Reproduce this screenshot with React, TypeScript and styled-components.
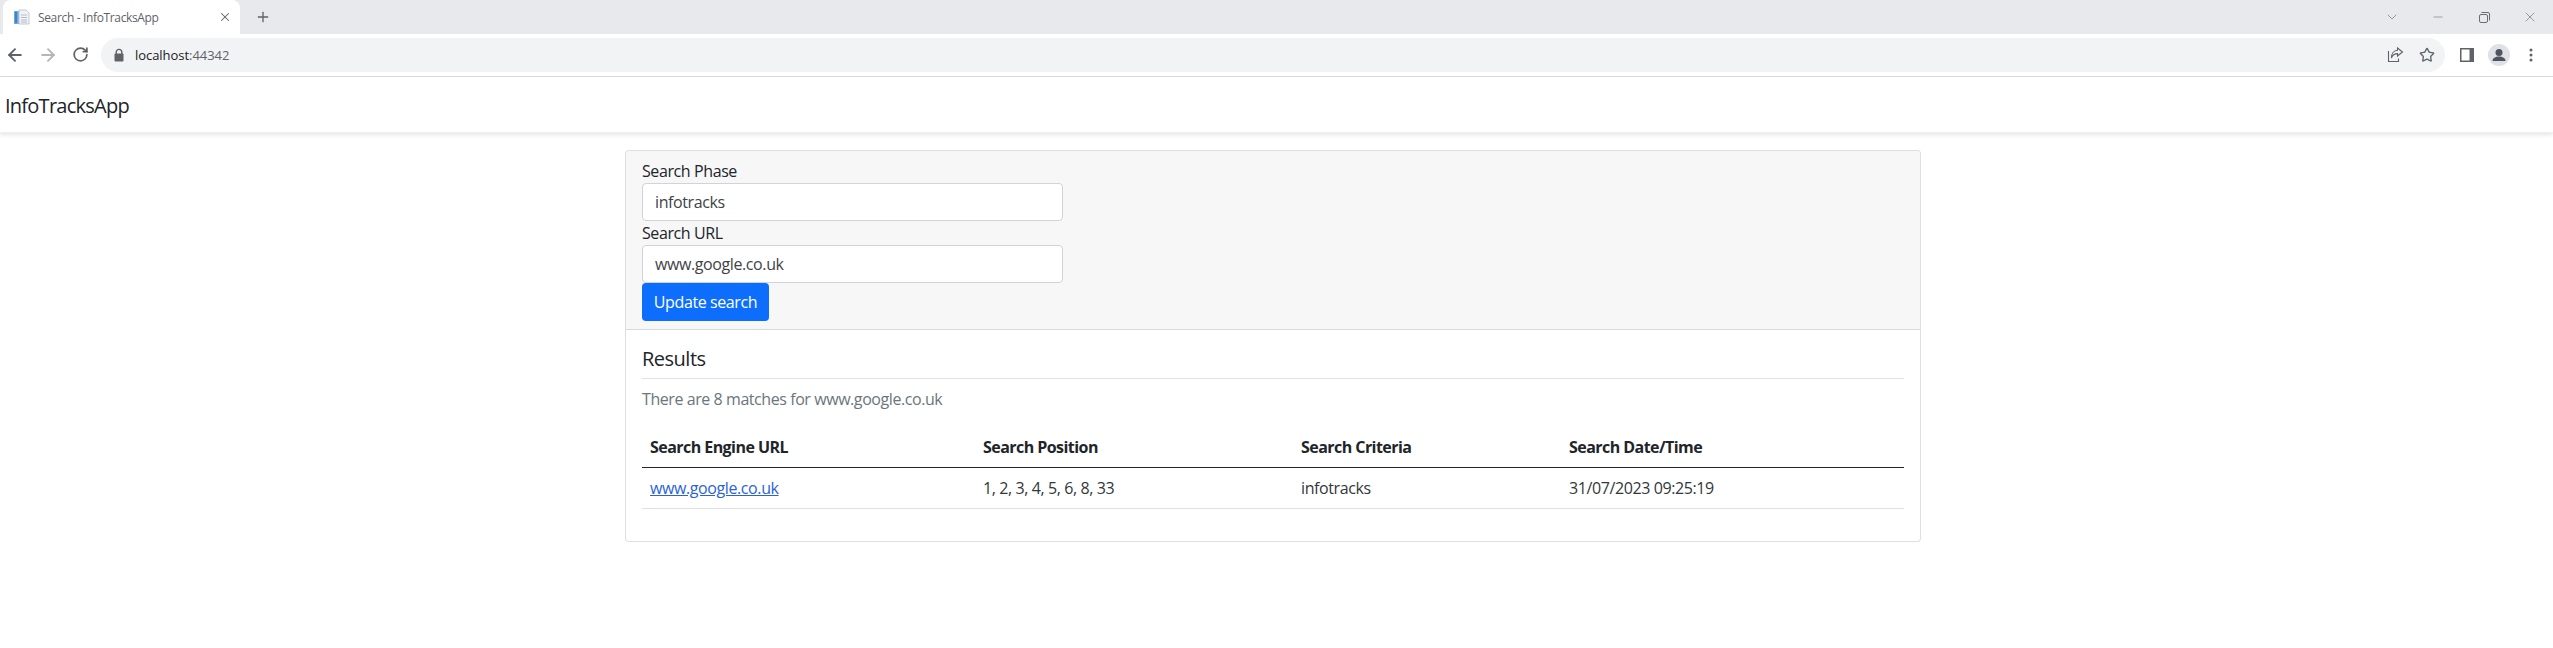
import * as React from "react";
import styled, { createGlobalStyle } from "styled-components";
import { ArrowLeft, ArrowRight, RotateCw, Star, Plus, X, ChevronDown, Minus } from "lucide-react";

const GlobalStyle = createGlobalStyle`
  html, body {
    margin: 0;
    padding: 0;
    background: #fff;
    font-family: "Open Sans", "Noto Sans", sans-serif;
    color: #212529;
  }
  * { box-sizing: border-box; }
`;

const TabStrip = styled.div`
  height: 34px;
  background: #e7e9ec;
  display: flex;
  align-items: stretch;
  padding-left: 3px;
`;
const Tab = styled.div`
  width: 237px;
  background: #fff;
  border-radius: 8px 8px 0 0;
  display: flex;
  align-items: center;
  padding: 0 8px 0 10px;
  position: relative;
`;
const TabTitle = styled.span`
  font-size: 12px;
  letter-spacing: -0.35px;
  color: #5f6368;
  margin-left: 8px;
  flex: 1;
`;
const NewTab = styled.div`
  width: 46px;
  display: flex;
  align-items: center;
  justify-content: center;
  color: #5f6368;
`;
const WindowControls = styled.div`
  margin-left: auto;
  display: flex;
  align-items: center;
  color: #6b6e73;
`;
const WindowButton = styled.div`
  width: 46px;
  height: 28px;
  display: flex;
  align-items: center;
  justify-content: center;
`;
const Toolbar = styled.div`
  height: 43px;
  background: #fff;
  border-bottom: 1px solid #dadce0;
  display: flex;
  align-items: center;
  padding: 0 0 1px 0;
  color: #5f6368;
`;
const NavButton = styled.div<{ $width: number; $muted?: boolean }>`
  width: ${(p) => p.$width}px;
  height: 34px;
  display: flex;
  align-items: center;
  justify-content: center;
  color: ${(p) => (p.$muted ? "#b4b6b9" : "#5f6368")};
`;
const Omnibox = styled.div`
  width: 2344px;
  height: 34px;
  margin-left: 7px;
  border-radius: 17px;
  background: #f1f3f4;
  display: flex;
  align-items: center;
  padding-left: 12px;
`;
const UrlHost = styled.span`
  font-size: 13px;
  color: #202124;
  margin-left: 10px;
  letter-spacing: -0.05px;
`;
const UrlPort = styled.span`
  color: #5f6368;
`;
const OmniActions = styled.div`
  margin-left: auto;
  display: flex;
  align-items: center;
  gap: 15px;
  padding-right: 10px;
`;
const ToolbarEnd = styled.div`
  display: flex;
  align-items: center;
  padding-left: 6px;
`;
const ToolbarSlot = styled.div`
  width: 32px;
  display: flex;
  align-items: center;
  justify-content: center;
`;
const Avatar = styled.div`
  width: 22px;
  height: 22px;
  border-radius: 50%;
  background: #dee1e6;
  display: flex;
  align-items: center;
  justify-content: center;
  overflow: hidden;
`;
const Navbar = styled.nav`
  height: 56px;
  background: #fff;
  display: flex;
  align-items: center;
  padding: 1px 0 0 5px;
  box-shadow: 0 2px 4px rgba(0, 0, 0, 0.1);
  border-bottom: 1px solid #f0f0f0;
`;
const Brand = styled.a`
  font-size: 20px;
  color: #212529;
  letter-spacing: -0.75px;
`;
const Main = styled.main`
  width: 1296px;
  margin: 17px 0 0 625px;
`;
const Card = styled.section`
  border: 1px solid rgba(0, 0, 0, 0.125);
  border-radius: 4px;
  background: #fff;
`;
const CardHeader = styled.div`
  background: #f7f7f7;
  border-bottom: 1px solid rgba(0, 0, 0, 0.125);
  padding: 8px 16px;
  border-radius: 3px 3px 0 0;
`;
const Label = styled.label`
  display: block;
  font-size: 16px;
  line-height: 24px;
  letter-spacing: -0.4px;
`;
const FieldBox = styled.div`
  width: 421px;
  height: 38px;
  border: 1px solid #ced4da;
  border-radius: 4px;
  background: #fff;
  padding: 0 12px;
  display: flex;
  align-items: center;
  font-size: 16px;
  letter-spacing: -0.4px;
  color: #3f4347;
`;
const PrimaryButton = styled.button`
  display: block;
  width: 127px;
  height: 38px;
  padding: 0;
  border: none;
  border-radius: 4px;
  background: #0d6efd;
  color: #fff;
  font-family: inherit;
  font-size: 16px;
  letter-spacing: -0.4px;
`;
const CardBody = styled.div`
  padding: 16px;
`;
const Heading = styled.h5`
  margin: 0;
  font-size: 20px;
  line-height: 26px;
  height: 24px;
  font-weight: 400;
  letter-spacing: -0.5px;
`;
const Rule = styled.hr`
  margin: 8px 0;
  border: none;
  border-top: 1px solid #e0e1e2;
`;
const Muted = styled.p`
  margin: 0 0 15px;
  font-size: 16px;
  line-height: 24px;
  color: #6c757d;
  letter-spacing: -0.43px;
`;
const Table = styled.table`
  width: 1262px;
  table-layout: fixed;
  border-collapse: collapse;
  margin-bottom: 16px;
`;
const HeadCell = styled.th<{ $width: number }>`
  width: ${(p) => p.$width}px;
  padding: 9px 8px 7px;
  height: 41px;
  text-align: left;
  font-size: 16px;
  line-height: 24px;
  font-weight: 700;
  letter-spacing: -0.55px;
  border-bottom: 1px solid #212529;
`;
const Cell = styled.td`
  padding: 8px;
  font-size: 16px;
  line-height: 24px;
  letter-spacing: -0.4px;
  color: #33373b;
  border-bottom: 1px solid #dee2e6;
`;
const Link = styled.a`
  color: #2a63d8;
  text-decoration: underline;
`;

const columns = [
  { title: "Search Engine URL", width: 333 },
  { title: "Search Position", width: 318 },
  { title: "Search Criteria", width: 268 },
  { title: "Search Date/Time", width: 343 },
];

const PageIcon = () => (
  <svg width="17" height="17" viewBox="0 0 17 17">
    <rect x="1" y="2" width="5" height="13" fill="#6fa8dc" />
    <rect x="2" y="3" width="2" height="11" fill="#3d85c6" />
    <path d="M6 1h7l3 3v11H6z" fill="#f1f3f6" stroke="#c2c8d0" strokeWidth="1" />
    <path d="M8 6h6M8 8.5h6M8 11h6M8 13h6" stroke="#b5bcc6" strokeWidth="1" />
  </svg>
);
const LockIcon = () => (
  <svg width="12" height="14" viewBox="0 0 12 14">
    <path d="M3.2 6V4.2a2.8 2.8 0 0 1 5.6 0V6" fill="none" stroke="#5f6368" strokeWidth="1.4" />
    <rect x="1.5" y="5.5" width="9" height="8" rx="1" fill="#5f6368" />
  </svg>
);
const ShareIcon = () => (
  <svg width="17" height="17" viewBox="0 0 17 17" fill="none" stroke="#5f6368" strokeWidth="1.1">
    <path d="M1.5 5v10.5h10v-3" />
    <path d="M10.5 2l5 4-5 4V7.6C7.5 7.6 5.5 9 4.4 12c0-4.5 2.5-7.5 6.1-7.7z" />
  </svg>
);
const RestoreIcon = () => (
  <svg width="11" height="11" viewBox="0 0 11 11" fill="none" stroke="#6b6e73" strokeWidth="1">
    <rect x="0.5" y="2.5" width="8" height="8" rx="1.5" />
    <path d="M2.5 0.5h6.5a1.5 1.5 0 0 1 1.5 1.5v6.5" />
  </svg>
);
const SidePanelIcon = () => (
  <svg width="14" height="14" viewBox="0 0 14 14">
    <rect x="0" y="0" width="14" height="14" fill="#5f6368" />
    <rect x="1.5" y="1.5" width="8" height="11" fill="#fff" />
  </svg>
);
const PersonIcon = () => (
  <svg width="22" height="22" viewBox="0 0 22 22" fill="#50535e">
    <circle cx="11" cy="8.5" r="3.5" />
    <path d="M4.5 17c0-3 3-4.5 6.5-4.5s6.5 1.5 6.5 4.5z" />
  </svg>
);
const DotsIcon = () => (
  <svg width="4" height="14" viewBox="0 0 4 14" fill="#5f6368">
    <circle cx="2" cy="2" r="1.5" />
    <circle cx="2" cy="7" r="1.5" />
    <circle cx="2" cy="12" r="1.5" />
  </svg>
);

export default function App() {
  return (
    <>
      <GlobalStyle />
      <TabStrip>
        <Tab>
          <PageIcon />
          <TabTitle>Search - InfoTracksApp</TabTitle>
          <X size={14} strokeWidth={1.8} color="#5f6368" />
        </Tab>
        <NewTab>
          <Plus size={16} strokeWidth={2} />
        </NewTab>
        <WindowControls>
          <WindowButton>
            <ChevronDown size={16} strokeWidth={1} />
          </WindowButton>
          <WindowButton>
            <Minus size={14} strokeWidth={1} />
          </WindowButton>
          <WindowButton>
            <RestoreIcon />
          </WindowButton>
          <WindowButton>
            <X size={16} strokeWidth={1} />
          </WindowButton>
        </WindowControls>
      </TabStrip>
      <Toolbar>
        <NavButton $width={30}>
          <ArrowLeft size={20} strokeWidth={2.3} />
        </NavButton>
        <NavButton $width={36} $muted>
          <ArrowRight size={20} strokeWidth={2.3} />
        </NavButton>
        <NavButton $width={28}>
          <RotateCw size={17} strokeWidth={2.4} />
        </NavButton>
        <Omnibox>
          <LockIcon />
          <UrlHost>
            localhost<UrlPort>:44342</UrlPort>
          </UrlHost>
          <OmniActions>
            <ShareIcon />
            <Star size={16} strokeWidth={2} color="#5f6368" />
          </OmniActions>
        </Omnibox>
        <ToolbarEnd>
          <ToolbarSlot>
            <SidePanelIcon />
          </ToolbarSlot>
          <ToolbarSlot>
            <Avatar>
              <PersonIcon />
            </Avatar>
          </ToolbarSlot>
          <ToolbarSlot>
            <DotsIcon />
          </ToolbarSlot>
        </ToolbarEnd>
      </Toolbar>
      <Navbar>
        <Brand>InfoTracksApp</Brand>
      </Navbar>
      <Main>
        <Card>
          <CardHeader>
            <Label>Search Phase</Label>
            <FieldBox>infotracks</FieldBox>
            <Label>Search URL</Label>
            <FieldBox>www.google.co.uk</FieldBox>
            <PrimaryButton>Update search</PrimaryButton>
          </CardHeader>
          <CardBody>
            <Heading>Results</Heading>
            <Rule />
            <Muted>There are 8 matches for www.google.co.uk</Muted>
            <Table>
              <thead>
                <tr>
                  {columns.map((c) => (
                    <HeadCell key={c.title} $width={c.width}>
                      {c.title}
                    </HeadCell>
                  ))}
                </tr>
              </thead>
              <tbody>
                <tr>
                  <Cell>
                    <Link href="#">www.google.co.uk</Link>
                  </Cell>
                  <Cell>1, 2, 3, 4, 5, 6, 8, 33</Cell>
                  <Cell>infotracks</Cell>
                  <Cell>31/07/2023 09:25:19</Cell>
                </tr>
              </tbody>
            </Table>
          </CardBody>
        </Card>
      </Main>
    </>
  );
}
